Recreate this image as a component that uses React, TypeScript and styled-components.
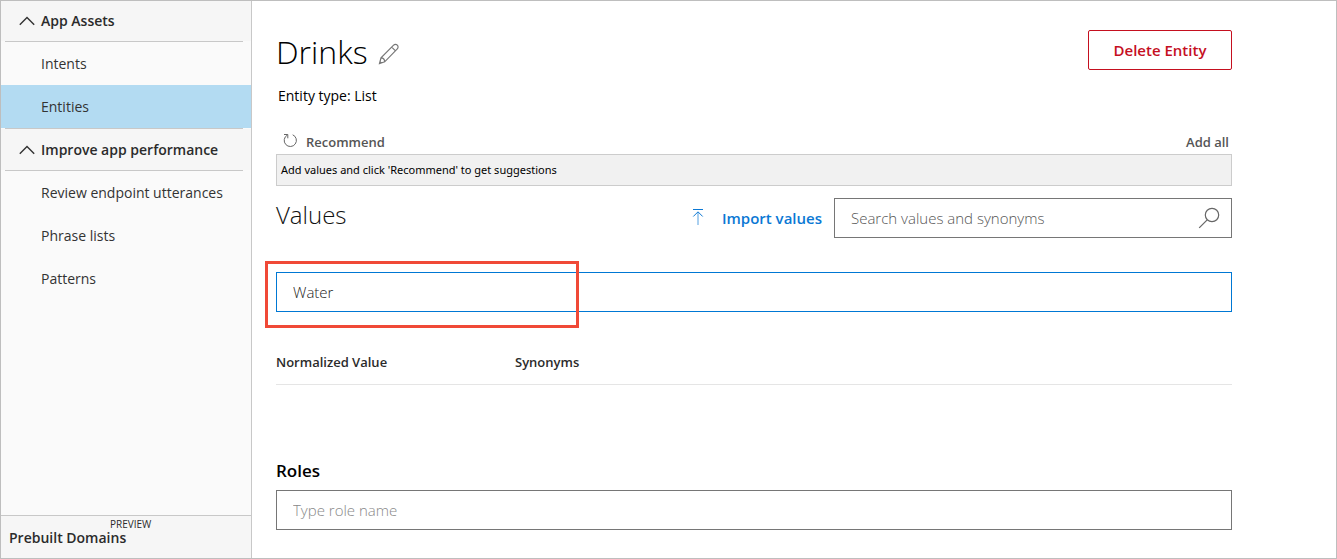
import React from "react";
import styled, { createGlobalStyle } from "styled-components";

const Global = createGlobalStyle`
  *, *::before, *::after { box-sizing: border-box; }
  body {
    margin: 0;
    font-family: "Open Sans", "Noto Sans", sans-serif;
    color: #2b2b2b;
    background: #fff;
  }
  button, input { font-family: inherit; }
`;

const Page = styled.div`
  display: flex;
  min-height: 100vh;
  border: 1px solid #bebebe;
`;

const Sidebar = styled.nav`
  display: flex;
  flex-direction: column;
  flex: 0 0 251px;
  background: #fafafa;
  border-right: 1px solid #c8c8c8;
`;

const GroupButton = styled.button<{ $first?: boolean }>`
  display: flex;
  align-items: center;
  gap: 6px;
  width: 100%;
  height: ${(p) => (p.$first ? 40 : 41)}px;
  padding: 0 0 0 18px;
  border: 0;
  background: #f6f6f6;
  color: #2b2b2b;
  font-size: 14px;
  font-weight: 600;
  line-height: 20px;
`;

const GroupRule = styled.hr`
  width: calc(100% - 12px);
  height: 1px;
  margin: 0 8px 0 4px;
  border: 0;
  background: #c8c8c8;
`;

const NavLink = styled.a<{ $active?: boolean }>`
  display: block;
  padding: 12px 0 11px 40px;
  background: ${(p) => (p.$active ? "#b3dbf2" : "transparent")};
  color: #333;
  font-size: 14px;
  line-height: 20px;
  text-decoration: none;
`;

const DomainsLink = styled.a`
  display: flex;
  flex-direction: column;
  height: 43px;
  margin-top: auto;
  padding: 3px 8px;
  border-top: 1px solid #c8c8c8;
  background: #f6f6f6;
  color: #2b2b2b;
  font-size: 14px;
  font-weight: 600;
  line-height: 16px;
  text-decoration: none;
`;

const Preview = styled.span`
  padding-left: 101px;
  font-size: 10px;
  font-weight: 400;
  line-height: 11px;
`;

const Main = styled.main`
  flex: 1;
  min-width: 0;
  padding: 29px 104px 28px 24px;
`;

const Row = styled.div`
  display: flex;
  justify-content: space-between;
  align-items: flex-start;
`;

const TitleGroup = styled.div`
  display: flex;
  align-items: center;
  gap: 10px;
`;

const Title = styled.h1`
  margin: 0;
  color: #000;
  font-size: 32px;
  font-weight: 300;
  line-height: 44px;
`;

const IconButton = styled.button`
  display: flex;
  padding: 3px 0 0;
  border: 0;
  background: none;
`;

const DeleteButton = styled.button`
  width: 144px;
  height: 40px;
  padding: 0;
  border: 1px solid #c50f1f;
  border-radius: 2px;
  background: #fff;
  color: #c50f1f;
  font-size: 15px;
  font-weight: 600;
`;

const EntityType = styled.p`
  margin: 12px 2px 0;
  color: #000;
  font-size: 14px;
  line-height: 20px;
`;

const SuggestBar = styled(Row)`
  margin-top: 26px;
  padding: 0 3px 0 7px;
`;

const SmallButton = styled.button`
  display: flex;
  align-items: center;
  gap: 8px;
  padding: 0;
  border: 0;
  background: none;
  color: #555;
  font-size: 13px;
  font-weight: 600;
  line-height: 20px;
`;

const Suggestion = styled.p`
  margin: 2px 0 0;
  padding: 7px 4px;
  border: 1px solid #ccc;
  background: #f1f1f1;
  color: #000;
  font-family: "Noto Sans", sans-serif;
  font-size: 11px;
  line-height: 16px;
`;

const ValuesBar = styled(Row)`
  margin-top: 12px;
`;

const ValuesHeading = styled.h2`
  margin: 0;
  color: #111;
  font-size: 24px;
  font-weight: 300;
  line-height: 34px;
`;

const Tools = styled.div`
  display: flex;
  align-items: center;
  gap: 12px;
`;

const ImportButton = styled.button`
  display: flex;
  align-items: center;
  gap: 18px;
  padding: 0;
  border: 0;
  background: none;
  color: #0b78d4;
  font-size: 15px;
  font-weight: 600;
`;

const SearchBox = styled.label`
  display: flex;
  align-items: center;
  width: 398px;
  height: 40px;
  padding: 0 11px 0 16px;
  border: 1px solid #767676;
`;

const SearchInput = styled.input`
  flex: 1;
  min-width: 0;
  padding: 0;
  border: 0;
  outline: 0;
  background: none;
  font-size: 15px;
  font-weight: 300;
  &::placeholder { color: #555; opacity: 1; }
`;

const TextInput = styled.input`
  display: block;
  width: 100%;
  height: 40px;
  padding: 0 16px;
  border: 1px solid #767676;
  outline: 0;
  color: #222;
  background: #fff;
  font-size: 15px;
  font-weight: 300;
  &::placeholder { color: #888; opacity: 1; }
`;

const ValueField = styled.div`
  position: relative;
  margin-top: 34px;
`;

const ValueInput = styled(TextInput)`
  border-color: #0078d4;
`;

const Highlight = styled.div`
  position: absolute;
  top: -11px;
  left: -11px;
  width: 314px;
  height: 67px;
  border: 3px solid #f04937;
  pointer-events: none;
`;

const ValuesTable = styled.table`
  width: 100%;
  margin-top: 28px;
  border-collapse: collapse;
  table-layout: fixed;
`;

const HeadCell = styled.th`
  padding: 12px 0;
  border-bottom: 1px solid #e5e5e5;
  font-size: 13px;
  font-weight: 600;
  line-height: 20px;
  text-align: left;
  &:first-child { width: 25%; }
`;

const RolesLabel = styled.label`
  display: block;
  margin-top: 74px;
  margin-bottom: 7px;
  color: #000;
  font-size: 17px;
  font-weight: 600;
  line-height: 24px;
`;

const Chevron = () => (
  <svg width="16" height="10" viewBox="0 0 16 10" fill="none" stroke="#333" strokeWidth="1.4" aria-hidden="true">
    <path d="M.8 8.7 8 1.5l7.2 7.2" />
  </svg>
);

const Pencil = () => (
  <svg width="22" height="22" viewBox="0 0 22 22" fill="none" stroke="#777" strokeWidth="1.2" aria-hidden="true">
    <path d="M1.5 20.5 3 14.8 15.6 2.2a2.6 2.6 0 0 1 3.7 0 2.6 2.6 0 0 1 0 3.7L6.7 18.8 1.5 20.5ZM3 14.8c2.3.1 3.7 1.5 3.7 4M13.7 4.1l3.8 3.8M1.8 18.5l1.5 1.4" />
  </svg>
);

const Refresh = () => (
  <svg width="15" height="18" viewBox="0 0 15 18" fill="none" stroke="#666" aria-hidden="true">
    <path d="M9.7 1.8a6.1 6.1 0 1 1-5.4.3M1 1.5h3.8v3.8" />
  </svg>
);

const Upload = () => (
  <svg width="12" height="20" viewBox="0 0 12 20" fill="none" stroke="#0b78d4" aria-hidden="true">
    <path d="M1 1.5h10M1.3 8.5 6 3.8l4.7 4.7" />
    <path d="M6 17V4" strokeOpacity=".7" />
  </svg>
);

const Magnifier = () => (
  <svg width="22" height="22" viewBox="0 0 22 22" fill="none" stroke="#666" strokeWidth="1.2" aria-hidden="true">
    <circle cx="14" cy="8" r="6.7" />
    <path d="M9.2 12.8 1.2 20.8" />
  </svg>
);

type Group = { name: string; items: string[] };

const groups: Group[] = [
  { name: "App Assets", items: ["Intents", "Entities"] },
  { name: "Improve app performance", items: ["Review endpoint utterances", "Phrase lists", "Patterns"] },
];

export default function App() {
  return (
    <Page>
      <Global />
      <Sidebar>
        {groups.map((group, index) => (
          <React.Fragment key={group.name}>
            {index > 0 && <GroupRule />}
            <GroupButton $first={index === 0}>
              <Chevron />
              {group.name}
            </GroupButton>
            <GroupRule />
            {group.items.map((item) => (
              <NavLink key={item} href="#" $active={item === "Entities"}>
                {item}
              </NavLink>
            ))}
          </React.Fragment>
        ))}
        <DomainsLink href="#">
          <Preview>PREVIEW</Preview>
          Prebuilt Domains
        </DomainsLink>
      </Sidebar>
      <Main>
        <Row>
          <TitleGroup>
            <Title>Drinks</Title>
            <IconButton aria-label="Rename entity"><Pencil /></IconButton>
          </TitleGroup>
          <DeleteButton>Delete Entity</DeleteButton>
        </Row>
        <EntityType>Entity type: List</EntityType>
        <SuggestBar>
          <SmallButton><Refresh />Recommend</SmallButton>
          <SmallButton>Add all</SmallButton>
        </SuggestBar>
        <Suggestion>Add values and click 'Recommend' to get suggestions</Suggestion>
        <ValuesBar>
          <ValuesHeading>Values</ValuesHeading>
          <Tools>
            <ImportButton><Upload />Import values</ImportButton>
            <SearchBox>
              <SearchInput aria-label="Search values and synonyms" placeholder="Search values and synonyms" />
              <Magnifier />
            </SearchBox>
          </Tools>
        </ValuesBar>
        <ValueField>
          <ValueInput aria-label="New value" defaultValue="Water" />
          <Highlight />
        </ValueField>
        <ValuesTable>
          <thead>
            <tr>
              <HeadCell scope="col">Normalized Value</HeadCell>
              <HeadCell scope="col">Synonyms</HeadCell>
            </tr>
          </thead>
        </ValuesTable>
        <RolesLabel htmlFor="role">Roles</RolesLabel>
        <TextInput id="role" placeholder="Type role name" />
      </Main>
    </Page>
  );
}
